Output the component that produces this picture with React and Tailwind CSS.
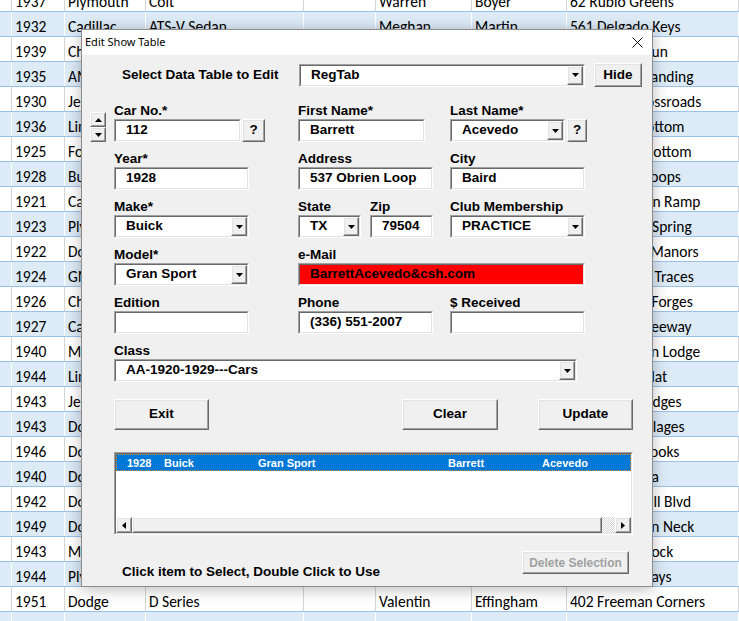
const sheetRows = [
  ["1937", "Plymouth", "Colt", "Warren", "Boyer", "62 Rubio Greens"],
  ["1932", "Cadillac", "ATS-V Sedan", "Meghan", "Martin", "561 Delgado Keys"],
  ["1939", "Chevrolet", "Master Deluxe", "Sandra", "Lowe", "874 Harrell Run"],
  ["1935", "AMC", "Lafayette", "Dale", "Pierce", "302 Pringle Landing"],
  ["1930", "Jeep", "Model A", "Irene", "Bishop", "8804 Hall Crossroads"],
  ["1936", "Lincoln", "Zephyr", "Marcus", "Holt", "1455 Love Bottom"],
  ["1925", "Ford", "Model T", "Gloria", "Nash", "6040 Smith Bottom"],
  ["1928", "Buick", "Gran Sport", "Barrett", "Acevedo", "537 Obrien Loops"],
  ["1921", "Cadillac", "Type 59", "Harold", "Reyes", "2207 Coleman Ramp"],
  ["1923", "Plymouth", "Roadster", "Elena", "Cobb", "9060 Willow Spring"],
  ["1922", "Dodge", "Series 116", "Curtis", "Floyd", "45 Crawford Manors"],
  ["1924", "GMC", "K-16", "Wanda", "Bauer", "1190 Daniels Traces"],
  ["1926", "Chrysler", "Imperial", "Louis", "Grant", "8812 Mason Forges"],
  ["1927", "Cadillac", "LaSalle", "Nora", "Frost", "3378 Ortiz Freeway"],
  ["1940", "Mercury", "Eight", "Shawn", "Moody", "52 Richardson Lodge"],
  ["1944", "Lincoln", "Continental", "Alma", "Tate", "440 Ward's Flat"],
  ["1943", "Jeep", "Willys MB", "Derek", "Pope", "2713 Kirby Ridges"],
  ["1943", "Dodge", "WC-51", "Ruth", "Dalton", "1734 Hale Villages"],
  ["1946", "Dodge", "Custom", "Gavin", "Shaw", "938 Garza Brooks"],
  ["1940", "Dodge", "Luxury Liner", "Paula", "Briggs", "6180 Via Vista"],
  ["1942", "Dodge", "Deluxe", "Ivan", "Sparks", "5520 Cornwell Blvd"],
  ["1949", "Dodge", "Wayfarer", "Lydia", "Horn", "1492 Vaughan Neck"],
  ["1943", "Mercury", "Town Sedan", "Felix", "Marsh", "709 Riviera Rock"],
  ["1944", "Plymouth", "Special", "Opal", "Rowe", "3386 Lane Ways"],
  ["1951", "Dodge", "D Series", "Valentin", "Effingham", "402 Freeman Corners"],
  ["1948", "Ford", "F-1", "Jenna", "Wolfe", "19 Ellis Drive"],
];

function Arrow({ dir = "down" }) {
  const flat = dir === "up" || dir === "down";
  const w = flat ? 7 : 4;
  const h = flat ? 4 : 7;
  const d = {
    down: "M0 0h7L3.5 4z",
    up: "M0 4h7L3.5 0z",
    left: "M4 0v7L0 3.5z",
    right: "M0 0v7L4 3.5z",
  }[dir];
  return (
    <svg width={w} height={h} viewBox={`0 0 ${w} ${h}`}>
      <path d={d} fill="#000" />
    </svg>
  );
}

function Raised({ className = "", children }) {
  return (
    <div
      className={`border border-t-white border-l-white border-b-[#696969] border-r-[#696969] bg-[#f0f0f0] ${className}`}
    >
      <div className="flex h-full w-full items-center justify-center border border-t-[#e3e3e3] border-l-[#e3e3e3] border-b-[#a0a0a0] border-r-[#a0a0a0]">
        {children}
      </div>
    </div>
  );
}

function Sunken({ className = "", inner = "bg-white", children }) {
  return (
    <div
      className={`border border-t-[#a0a0a0] border-l-[#a0a0a0] border-b-white border-r-white ${className}`}
    >
      <div
        className={`flex h-full w-full border border-t-[#696969] border-l-[#696969] border-b-[#e3e3e3] border-r-[#e3e3e3] ${inner}`}
      >
        {children}
      </div>
    </div>
  );
}

function Field({ label, value, width, combo, red }) {
  return (
    <div>
      <div className="h-[16px] whitespace-nowrap leading-[16px]">{label}</div>
      <Sunken className={`h-[23px] ${width}`} inner={red ? "bg-[#ff0000]" : "bg-white"}>
        <span className="flex-1 self-center truncate pl-[10px]">{value}</span>
        {combo && (
          <Raised className="h-full w-[16px]">
            <Arrow />
          </Raised>
        )}
      </Sunken>
    </div>
  );
}

function Sheet() {
  return (
    <div className="mt-[-13px] flex flex-col font-['Carlito','Lato',sans-serif] text-[15.5px] text-black">
      {sheetRows.map((r, i) => {
        const banded = i % 2 === 1;
        const line = banded ? "border-white" : "border-[#d4d4d4]";
        const cells = ["", r[0], r[1], r[2], "", r[3], r[4], r[5]];
        return (
          <div
            key={i}
            className={`grid h-[25px] grid-cols-[12px_53px_81px_158px_72px_96px_95px_1fr] border-b border-b-[#9bc2e6] ${
              banded ? "bg-[#ddebf7]" : "bg-white"
            }`}
          >
            {cells.map((c, j) => (
              <div
                key={j}
                className={`flex items-center overflow-hidden whitespace-nowrap border-r pl-[3px] pt-[5px] ${line}`}
              >
                {c}
              </div>
            ))}
          </div>
        );
      })}
    </div>
  );
}

function EditDialog() {
  return (
    <div className="absolute left-[81px] top-[29px] flex h-[558px] w-[572px] flex-col border border-[#8c8c8c] bg-[#f0f0f0] shadow-[0_2px_14px_rgba(0,0,0,0.28)]">
      <div className="flex h-[25px] items-center bg-white pl-[3px] font-['Noto_Sans',sans-serif] text-[11px] text-black">
        <span>Edit Show Table</span>
        <svg className="ml-auto mr-[9px]" width="11" height="11" viewBox="0 0 11 11">
          <path d="M0.5 0.5l10 10M10.5 0.5l-10 10" stroke="#111" strokeWidth="1" />
        </svg>
      </div>

      <div className="flex flex-1 flex-col pt-[8px] font-['Liberation_Sans',Arial,sans-serif] text-[13.5px] font-bold text-black">
        <div className="flex items-center pl-[40px]">
          <div className="w-[177px] whitespace-nowrap">Select Data Table to Edit</div>
          <Sunken className="h-[23px] w-[286px]">
            <span className="flex-1 self-center pl-[10px]">RegTab</span>
            <Raised className="h-full w-[16px]">
              <Arrow />
            </Raised>
          </Sunken>
          <Raised className="ml-[9px] h-[24px] w-[48px]">Hide</Raised>
        </div>

        <div className="mt-[16px] grid grid-cols-[24px_184px_152px_137px] gap-y-[9px] pl-[8px]">
          <div className="flex flex-col self-end">
            <Raised className="h-[15px] w-[16px]">
              <Arrow dir="up" />
            </Raised>
            <Raised className="h-[15px] w-[16px]">
              <Arrow />
            </Raised>
          </div>
          <div>
            <div className="h-[16px] leading-[16px]">Car No.*</div>
            <div className="flex">
              <Sunken className="h-[23px] w-[127px]">
                <span className="self-center pl-[10px]">112</span>
              </Sunken>
              <Raised className="ml-[1px] h-[23px] w-[23px]">?</Raised>
            </div>
          </div>
          <Field label="First Name*" value="Barrett" width="w-[127px]" />
          <div>
            <div className="h-[16px] leading-[16px]">Last Name*</div>
            <div className="flex">
              <Sunken className="h-[23px] w-[134px]">
                <span className="flex-1 self-center pl-[10px]">Acevedo</span>
                <Raised className="h-full w-[16px]">
                  <Arrow />
                </Raised>
              </Sunken>
              <Raised className="ml-[2px] h-[23px] w-[23px]">?</Raised>
            </div>
          </div>

          <div />
          <Field label="Year*" value="1928" width="w-[135px]" />
          <Field label="Address" value="537 Obrien Loop" width="w-[135px]" />
          <Field label="City" value="Baird" width="w-[135px]" />

          <div />
          <Field label="Make*" value="Buick" width="w-[135px]" combo />
          <div className="flex gap-[9px]">
            <Field label="State" value="TX" width="w-[63px]" combo />
            <Field label="Zip" value="79504" width="w-[63px]" />
          </div>
          <Field label="Club Membership" value="PRACTICE" width="w-[135px]" combo />

          <div />
          <Field label="Model*" value="Gran Sport" width="w-[135px]" combo />
          <div className="col-span-2">
            <Field label="e-Mail" value="BarrettAcevedo&csh.com" width="w-[287px]" red />
          </div>

          <div />
          <Field label="Edition" value="" width="w-[135px]" />
          <Field label="Phone" value="(336) 551-2007" width="w-[135px]" />
          <Field label="$ Received" value="" width="w-[135px]" />

          <div />
          <div className="col-span-3">
            <Field label="Class" value="AA-1920-1929---Cars" width="w-[463px]" combo />
          </div>
        </div>

        <div className="mt-[17px] flex pl-[32px]">
          <Raised className="h-[31px] w-[95px]">Exit</Raised>
          <Raised className="ml-[193px] h-[31px] w-[96px]">Clear</Raised>
          <Raised className="ml-[40px] h-[31px] w-[95px]">Update</Raised>
        </div>

        <Sunken className="ml-[32px] mt-[22px] h-[83px] w-[519px]" inner="bg-white flex-col">
          <div className="flex-1">
            <div className="grid h-[17px] grid-cols-[37px_94px_190px_94px_1fr] items-center border border-dotted border-[#e0902a] bg-[#0078d7] pl-[10px] text-[11px] text-white">
              <span>1928</span>
              <span>Buick</span>
              <span>Gran Sport</span>
              <span>Barrett</span>
              <span>Acevedo</span>
            </div>
          </div>
          <div className="flex h-[16px] bg-[#f0f0f0]">
            <Raised className="h-full w-[16px]">
              <Arrow dir="left" />
            </Raised>
            <Raised className="h-full flex-1" />
            <div className="h-full w-[13px] bg-[repeating-conic-gradient(#ffffff_0_25%,#d8d8d8_0_50%)] bg-[length:2px_2px]" />
            <Raised className="h-full w-[16px]">
              <Arrow dir="right" />
            </Raised>
          </div>
        </Sunken>

        <div className="mt-[16px] flex items-start justify-between pl-[40px] pr-[23px]">
          <div className="mt-[13px] leading-[16px]">Click item to Select, Double Click to Use</div>
          <Raised className="h-[23px] w-[107px] text-[12px] text-[#a0a0a0]">Delete Selection</Raised>
        </div>
      </div>
    </div>
  );
}

export default function App() {
  return (
    <div className="relative h-[621px] w-[739px] overflow-hidden bg-white">
      <Sheet />
      <EditDialog />
    </div>
  );
}
